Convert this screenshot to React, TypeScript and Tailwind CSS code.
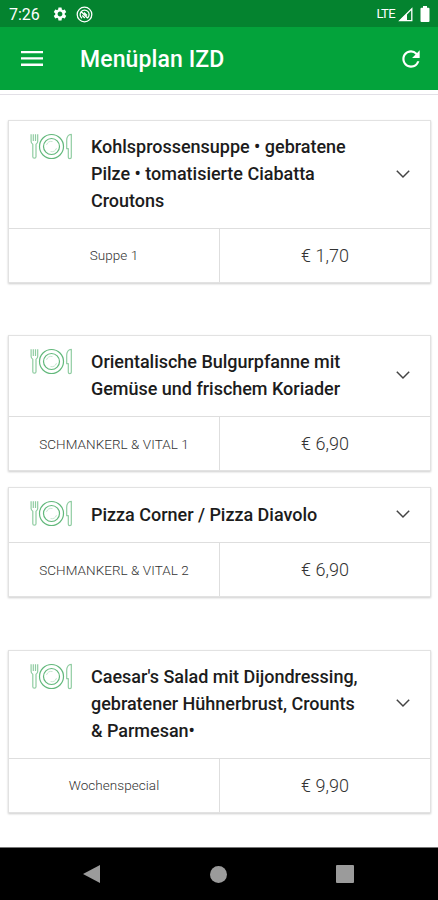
import { useState } from "react";
import { MdRefresh, MdSettings } from "react-icons/md";

type Meal = {
    title: string[];
    category: string;
    price: string;
};

const groups: Meal[][] = [
    [
        {
            title: ["Kohlsprossensuppe • gebratene", "Pilze • tomatisierte Ciabatta", "Croutons"],
            category: "Suppe 1",
            price: "€ 1,70",
        },
    ],
    [
        {
            title: ["Orientalische Bulgurpfanne mit", "Gemüse und frischem Koriader"],
            category: "SCHMANKERL & VITAL 1",
            price: "€ 6,90",
        },
        {
            title: ["Pizza Corner / Pizza Diavolo"],
            category: "SCHMANKERL & VITAL 2",
            price: "€ 6,90",
        },
    ],
    [
        {
            title: ["Caesar's Salad mit Dijondressing,", "gebratener Hühnerbrust, Crounts", "& Parmesan•"],
            category: "Wochenspecial",
            price: "€ 9,90",
        },
    ],
];

function PlateIcon() {
    return (
        <svg width="44" height="28" viewBox="0.5 0.3 44 28" fill="none" strokeLinejoin="round">
            <g stroke="#8fcca1" strokeWidth="1.2">
                <path d="M1.6 1.6v7c0 1.6.7 2.4 1.7 2.9V24c0 2 3.2 2 3.2 0V11.500c1-.5 1.700-1.300 1.700-2.900v-7M3.800 1.600v6.600M6 1.600v6.600" />
                <path d="M41.800 1.600v22.900c0 1.900-3 1.900-3 0v-8.500h-1.600V7.500c0-3.300 1.800-5.900 4.600-5.900z" />
            </g>
            <g stroke="#62b87b" strokeWidth="1.2">
                <circle cx="22" cy="13.8" r="12" />
                <circle cx="22" cy="13.8" r="8" />
            </g>
            <path d="M17 12.200a5.300 5.300 0 0 1 6-3.400M27 15.500a5.300 5.300 0 0 1-6 3.400" stroke="#8fcca1" strokeWidth="0.5" />
        </svg>
    );
}

function StatusBar() {
    return (
        <div className="flex h-[27px] shrink-0 items-center bg-[#04832f] pl-[9px] pr-[8px] pt-px text-white">
            <span className="w-[43px] pt-px text-[16px]">7:26</span>
            <MdSettings className="h-4 w-4" />
            <svg className="ml-[8px]" width="17" height="17" viewBox="0 0 17 17" fill="none" stroke="currentColor">
                <circle cx="8.5" cy="8.5" r="7.3" strokeWidth="1.3" />
                <path d="M6 12.200A4.500 4.500 0 1 1 11.500 12M5 5.500l6.500 6.500M8 6.500l3 3M6.300 9.500l2.500 2.500" strokeWidth="1.3" />
            </svg>
            <span className="ml-auto text-[13px] tracking-[-0.6px]">LTE</span>
            <svg className="ml-[3px]" width="15" height="15" viewBox="0 0 15 15" fill="none">
                <path d="M13.800 1.800V13.700H1.800z" stroke="currentColor" strokeWidth="1.3" />
                <path d="M9 6.500V14H1z" fill="currentColor" />
            </svg>
            <svg className="ml-[7px]" width="10" height="16" viewBox="0 0 10 16" fill="currentColor">
                <path d="M3 0h4v1.700h1.500a1 1 0 0 1 1 1V15a1 1 0 0 1-1 1h-7a1 1 0 0 1-1-1V2.700a1 1 0 0 1 1-1H3z" />
            </svg>
        </div>
    );
}

function MealCard({ meal }: { meal: Meal }) {
    const [open, setOpen] = useState(false);

    return (
        <div className="border border-[#e2e2e2] bg-white shadow-[0_1px_2px_rgba(0,0,0,0.2)]">
            <button onClick={() => setOpen(!open)} className="flex w-full items-center pb-[14px] pl-[21px] pr-[19px] pt-3 text-left">
                <span className="w-[61px] shrink-0 self-start">
                    <PlateIcon />
                </span>
                <span className="flex-1 text-[18px] font-medium leading-[27px] tracking-[-0.02px] text-[#1c1c1c]">
                    {meal.title.map((line) => (
                        <span key={line} className="block whitespace-nowrap">
                            {line}
                        </span>
                    ))}
                </span>
                <svg className={open ? "rotate-180" : ""} width="16" height="10" viewBox="0 0 16 10" fill="none" stroke="#444" strokeWidth="1.5">
                    <path d="M1.8 1.8L8 8l6.2-6.2" />
                </svg>
            </button>
            <div className="flex h-[54px] border-t border-[#dedede]">
                <div className="flex flex-1 items-center justify-center border-r border-[#dedede] text-[13.5px] font-light tracking-[0.05px] text-[#333]">
                    {meal.category}
                </div>
                <div className="flex flex-1 items-center justify-center text-[18px] font-light text-[#333]">{meal.price}</div>
            </div>
        </div>
    );
}

export default function App() {
    return (
        <div className="flex h-[900px] w-[438px] flex-col overflow-hidden bg-white font-[Roboto,sans-serif]">
            <StatusBar />
            <header className="flex h-[63px] shrink-0 items-center bg-[#03a33b] pl-[21px] pr-[14px] text-white">
                <button className="w-[59px]">
                    <svg width="22" height="17" viewBox="0 0 22 17" fill="currentColor">
                        <path d="M0 1h22v2.300H0zM0 7.300h22v2.300H0zM0 13.600h22v2.300H0z" />
                    </svg>
                </button>
                <h1 className="pt-[3px] text-[23px] font-medium tracking-[0.1px]">Menüplan IZD</h1>
                <button className="ml-auto">
                    <MdRefresh className="h-[26px] w-[26px]" />
                </button>
            </header>
            <div className="h-[5px] shrink-0 border-b border-[#e2e0e6]" />
            <main className="flex flex-1 flex-col gap-[52.4px] pl-2 pr-[7px] pt-[25px]">
                {groups.map((group) => (
                    <section key={group[0].title[0]} className="flex flex-col gap-4">
                        {group.map((meal) => (
                            <MealCard key={meal.category} meal={meal} />
                        ))}
                    </section>
                ))}
            </main>
            <nav className="flex h-[53px] shrink-0 items-center justify-between border-t border-[#777] bg-black pl-[83px] pr-[84px]">
                <svg width="18" height="18" viewBox="0 0 18 18" fill="#9b9b9b">
                    <path d="M17 0v18L0 9z" />
                </svg>
                <div className="h-[17px] w-[17px] rounded-full bg-[#9b9b9b]" />
                <div className="h-[18px] w-[18px] rounded-[1px] bg-[#9b9b9b]" />
            </nav>
        </div>
    );
}
